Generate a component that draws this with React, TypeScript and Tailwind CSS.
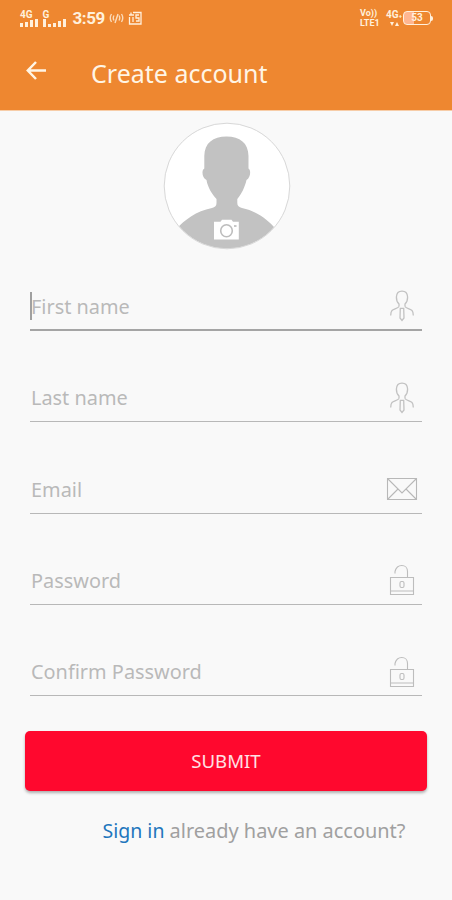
import type { ReactNode } from "react";

const PersonIcon = () => (
  <svg width="26" height="32" viewBox="0 0 26 32" fill="none" stroke="#c2c2c2" strokeWidth="1.3">
    <path d="M10 16.5V14C8 12 7.3 9.5 7.4 7C7.6 3.3 10 1.2 13 1.2S18.4 3.3 18.6 7C18.7 9.5 18 12 16 14V16.5" />
    <path d="M10 16.5C9 18.5 4.5 19 3 20.5C2 21.5 1.8 23 1.7 25.5M16 16.5C17 18.5 21.5 19 23 20.5C24 21.5 24.2 23 24.3 25.5" />
    <path d="M11.3 18.3H14.7L15 28L13 30.5L11 28Z" />
  </svg>
);

const MailIcon = () => (
  <svg width="32" height="24" viewBox="0 0 32 24" fill="none" stroke="#b8b8b8" strokeWidth="1.1">
    <path d="M1.5 1.5H30.5V22.5H1.5ZM1.5 1.5L16 16L30.5 1.5M1.5 22.5L12 12M30.5 22.5L20 12" />
  </svg>
);

const LockIcon = () => (
  <svg width="26" height="32" viewBox="0 0 26 32" fill="none" stroke="#bdbdbd" strokeWidth="1.1">
    <path d="M1.5 13.5H24.5V30.5H1.5ZM1.5 27H24.5M18.5 13.5V7.5C18.5 3.8 16 1.5 12.8 1.5C9.2 1.5 7 3.5 6 7.5V9.5" />
    <rect x="11" y="17.5" width="4" height="6" rx="1.5" />
  </svg>
);

function Field({ label, icon, active = false }: { label: string; icon: ReactNode; active?: boolean }) {
  return (
    <div className={`flex h-[50px] items-center justify-between ${active ? "border-b-2 border-[#a5a5a5]" : "border-b border-[#b8b8b8]"}`}>
      <div className="flex items-center pt-[3px]">
        {active && <span className="-mr-0.5 h-[28px] w-0.5 bg-[#a0a0a0]" />}
        <span className="pl-px text-[19.9px] text-[#b9b9b9]">{label}</span>
      </div>
      <div className="mr-1 flex w-8 justify-center pt-0.5">{icon}</div>
    </div>
  );
}

function Signal({ label, bars }: { label: string; bars: number[] }) {
  return (
    <div className="flex h-[17px] flex-col justify-end">
      <span className="text-[10px] leading-[9px] font-bold">{label}</span>
      <div className="flex h-[8px] items-end gap-[2px]">
        {bars.map((height, i) => (
          <span key={i} className="w-[3px] bg-[#fff0dc]" style={{ height }} />
        ))}
      </div>
    </div>
  );
}

function StatusBar() {
  return (
    <div className="flex h-9 items-center justify-between pr-[19px] pl-5 font-['Roboto',sans-serif] text-[#fff0dc]">
      <div className="flex items-center">
        <div className="w-[22.5px]"><Signal label="4G" bars={[4, 5, 7, 8]} /></div>
        <div className="w-[30px]"><Signal label="G" bars={[8, 3, 4, 6, 8]} /></div>
        <span className="w-[36px] text-[17px] leading-5 font-bold tracking-[-0.4px]">3:59</span>
        <svg className="opacity-80" width="15" height="14" viewBox="0 0 15 14" fill="none" stroke="currentColor" strokeWidth="1.4">
          <path d="M2.5 3Q0 7 2.5 11M5 4.5Q3.5 7 5 9.5M12.5 3Q15 7 12.5 11M10 4.5Q11.5 7 10 9.5M6 12L9 3" />
        </svg>
        <svg className="ml-1" width="14" height="14" viewBox="0 0 14 14" fill="none" stroke="currentColor" strokeWidth="1.3">
          <path d="M3 4V1.5M1 4H6M5 1.5H13V13H1.5V6M11 4H8V7H11V10H8M5 6V11" />
        </svg>
      </div>
      <div className="flex items-center">
        <div className="w-[25px] text-[9px] leading-[10px] font-bold"><div>Vo))</div><div>LTE1</div></div>
        <div className="flex w-[18px] flex-col items-center text-[10px] leading-[10px] font-bold">
          <span>4G<span className="text-[6px]">+</span></span>
          <svg width="9" height="6" viewBox="0 0 9 6" fill="currentColor"><path d="M0 1H4L2 5ZM5 5H9L7 1Z" /></svg>
        </div>
        <div className="flex h-[14px] w-[28px] items-center justify-center rounded-[4px] border border-[#fff0dc] bg-linear-to-r from-[#ffb690] from-40% to-transparent to-40%">
          <span className="text-[10px] leading-none font-bold">53</span>
        </div>
        <span className="h-[5px] w-[2px] rounded-r-sm bg-[#fff0dc]" />
      </div>
    </div>
  );
}

function Avatar() {
  return (
    <svg className="mx-auto block" width="128" height="128" viewBox="0 0 128 128">
      <defs><clipPath id="avatar-circle"><circle cx="64" cy="64" r="62.5" /></clipPath></defs>
      <circle cx="64" cy="64" r="62.5" fill="#fff" />
      <g fill="#c2c2c2" clipPath="url(#avatar-circle)">
        <path d="M63.5 14.5C77 14.5 85.3 21 85.5 34V46.5C88.3 48 87.5 56 83.5 58C82 65 78 73 74.3 77V81C74.3 84 76 85 79 86C94 89 105 98 113 107L100 130H28L13 107C22 98 33 89 49 86C52 85 53.5 84 53.5 81V77C49.5 73 44.5 65 43.5 58C39 56 38.3 48 41.3 46.5V34C41.5 21 50 14.5 63.5 14.5Z" />
      </g>
      <circle cx="64" cy="64" r="62.8" fill="none" stroke="#d8d8d8" />
      <path d="M51 99.8H57.5L59 97.8H68.5L70 99.8H75.8V117.5H51Z" fill="#fff" />
      <ellipse cx="63.5" cy="108.8" rx="5.8" ry="6" fill="none" stroke="#bdbdbd" strokeWidth="1.6" />
      <path d="M71 104H73.5" stroke="#b5b5b5" strokeWidth="1.5" />
    </svg>
  );
}

export default function App() {
  return (
    <main className="flex h-[900px] w-[452px] flex-col overflow-hidden bg-[#f9f9f9] font-['Noto_Sans',sans-serif]">
      <header className="h-[110px] shrink-0 bg-[#ee8730]">
        <StatusBar />
        <div className="flex h-[70px] items-center pl-[25px]">
          <svg width="22" height="22" viewBox="0 0 22 22" fill="none" stroke="#fff5e5" strokeWidth="2.5">
            <path d="M21 10.5H3M11 2L2.8 10.5L11 19" />
          </svg>
          <h1 className="mt-1.5 ml-11 text-[25px] text-[#fff5e5]">Create account</h1>
        </div>
      </header>
      <div className="h-px shrink-0 bg-[#f7cda8]" />
      <div className="pt-[11px] pl-px"><Avatar /></div>
      <form className="mt-[31px] flex flex-col gap-[41.3px] px-[30px]">
        <Field label="First name" icon={<PersonIcon />} active />
        <Field label="Last name" icon={<PersonIcon />} />
        <Field label="Email" icon={<MailIcon />} />
        <Field label="Password" icon={<LockIcon />} />
        <Field label="Confirm Password" icon={<LockIcon />} />
      </form>
      <button className="mx-[25px] mt-[34.8px] h-[60px] shrink-0 rounded-[5px] bg-[#ff082e] text-[18.6px] text-[#ffe0e4] shadow-[0_2px_3px_rgba(0,0,0,0.3)]">SUBMIT</button>
      <p className="mt-[26px] pl-[102.5px] text-[19.5px] leading-7 whitespace-nowrap text-[#a0a0a0]">
        <span className="text-[#2276bd]">Sign in</span><span className="text-[19.95px]"> already have an account?</span>
      </p>
    </main>
  );
}
